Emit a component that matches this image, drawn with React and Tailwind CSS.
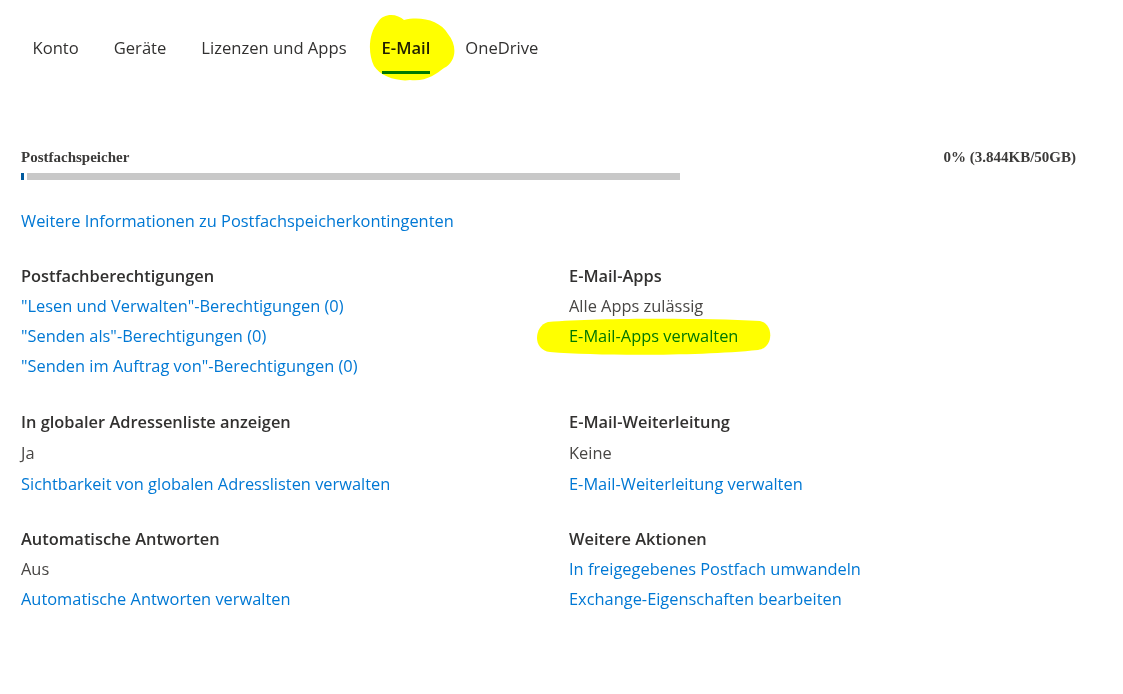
import clsx from 'clsx';

const tabs = ['Konto', 'Geräte', 'Lizenzen und Apps', 'E-Mail', 'OneDrive'];

const sections = [
  {
    left: {
      title: 'Postfachberechtigungen',
      links: [
        '"Lesen und Verwalten"-Berechtigungen (0)',
        '"Senden als"-Berechtigungen (0)',
        '"Senden im Auftrag von"-Berechtigungen (0)',
      ],
    },
    right: {
      title: 'E-Mail-Apps',
      value: 'Alle Apps zulässig',
      links: ['E-Mail-Apps verwalten'],
    },
  },
  {
    tall: true,
    left: {
      title: 'In globaler Adressenliste anzeigen',
      value: 'Ja',
      links: ['Sichtbarkeit von globalen Adresslisten verwalten'],
    },
    right: {
      title: 'E-Mail-Weiterleitung',
      value: 'Keine',
      links: ['E-Mail-Weiterleitung verwalten'],
    },
  },
  {
    left: {
      title: 'Automatische Antworten',
      value: 'Aus',
      links: ['Automatische Antworten verwalten'],
    },
    right: {
      title: 'Weitere Aktionen',
      links: ['In freigegebenes Postfach umwandeln', 'Exchange-Eigenschaften bearbeiten'],
    },
  },
];

function Block({ title, value, links, tall }) {
  const row = tall ? 'h-[31px] leading-[31px]' : 'h-[30px] leading-[30px]';
  return (
    <div className="flex flex-col">
      <div className={clsx(row, 'font-semibold text-[#323130]')}>{title}</div>
      {value && <div className={clsx(row, 'text-[#484644]')}>{value}</div>}
      {links.map((l) => (
        <a key={l} href="#" className={clsx(row, 'text-[#0078d4] w-fit')}>
          {l}
        </a>
      ))}
    </div>
  );
}

export default function App() {
  return (
    <div
      className="relative w-[1123px] h-[694px] bg-white overflow-hidden text-[16.4px]"
      style={{ fontFamily: '"Segoe UI", "Open Sans", sans-serif' }}
    >
      {/* Tabs */}
      <nav className="flex pl-[15px] pt-[34px] text-[16.6px]">
        {tabs.map((t) => (
          <div key={t} className="relative px-[17.5px] h-[40px] flex items-start">
            <span
              className={clsx(
                'leading-[28px]',
                t === 'E-Mail' ? 'font-semibold text-[#201f1e]' : 'text-[#323130]'
              )}
            >
              {t}
            </span>
            {t === 'E-Mail' && (
              <div className="absolute left-[17.5px] right-[17.5px] top-[37px] h-[3px] bg-[#0078d4]" />
            )}
          </div>
        ))}
      </nav>

      {/* Storage */}
      <div className="px-[21px] mt-[75px]">
        <div
          className="flex justify-between items-center font-bold text-[15px] leading-[16px] text-[#3b3a39] pr-[26px]"
          style={{ fontFamily: '"Liberation Serif", serif' }}
        >
          <span>Postfachspeicher</span>
          <span>0% (3.844KB/50GB)</span>
        </div>
        <div className="flex items-center gap-[3px] mt-[8px] w-[659px] h-[7px]">
          <div className="w-[3px] h-[7px] bg-[#005a9e]" />
          <div className="flex-1 h-[7px] bg-[#c8c8c8]" />
        </div>
        <a href="#" className="block mt-[26px] leading-[30px] text-[#0078d4] w-fit">
          Weitere Informationen zu Postfachspeicherkontingenten
        </a>
      </div>

      {/* Sections */}
      <div className="grid grid-cols-[548px_1fr] pl-[21px] mt-[25px] gap-y-[25px]">
        {sections.map((s, i) => (
          <div key={i} className="contents">
            <Block {...s.left} tall={s.tall} />
            <Block {...s.right} tall={s.tall} />
          </div>
        ))}
      </div>

      {/* Highlighter marks */}
      <svg className="absolute left-0 top-0 mix-blend-multiply pointer-events-none" width="1123" height="694">
        <path
          d="M378 22 C384 12 398 14 404 20 C420 16 440 20 448 34 C458 46 456 62 444 68 C436 74 426 82 410 80 C398 82 380 76 374 66 C368 54 368 34 378 22 Z"
          fill="#ffff00"
        />
        <path
          d="M548 322 C600 318 700 318 760 321 C774 324 774 348 758 350 C700 356 600 356 550 352 C532 350 534 326 548 322 Z"
          fill="#ffff00"
        />
      </svg>
    </div>
  );
}
